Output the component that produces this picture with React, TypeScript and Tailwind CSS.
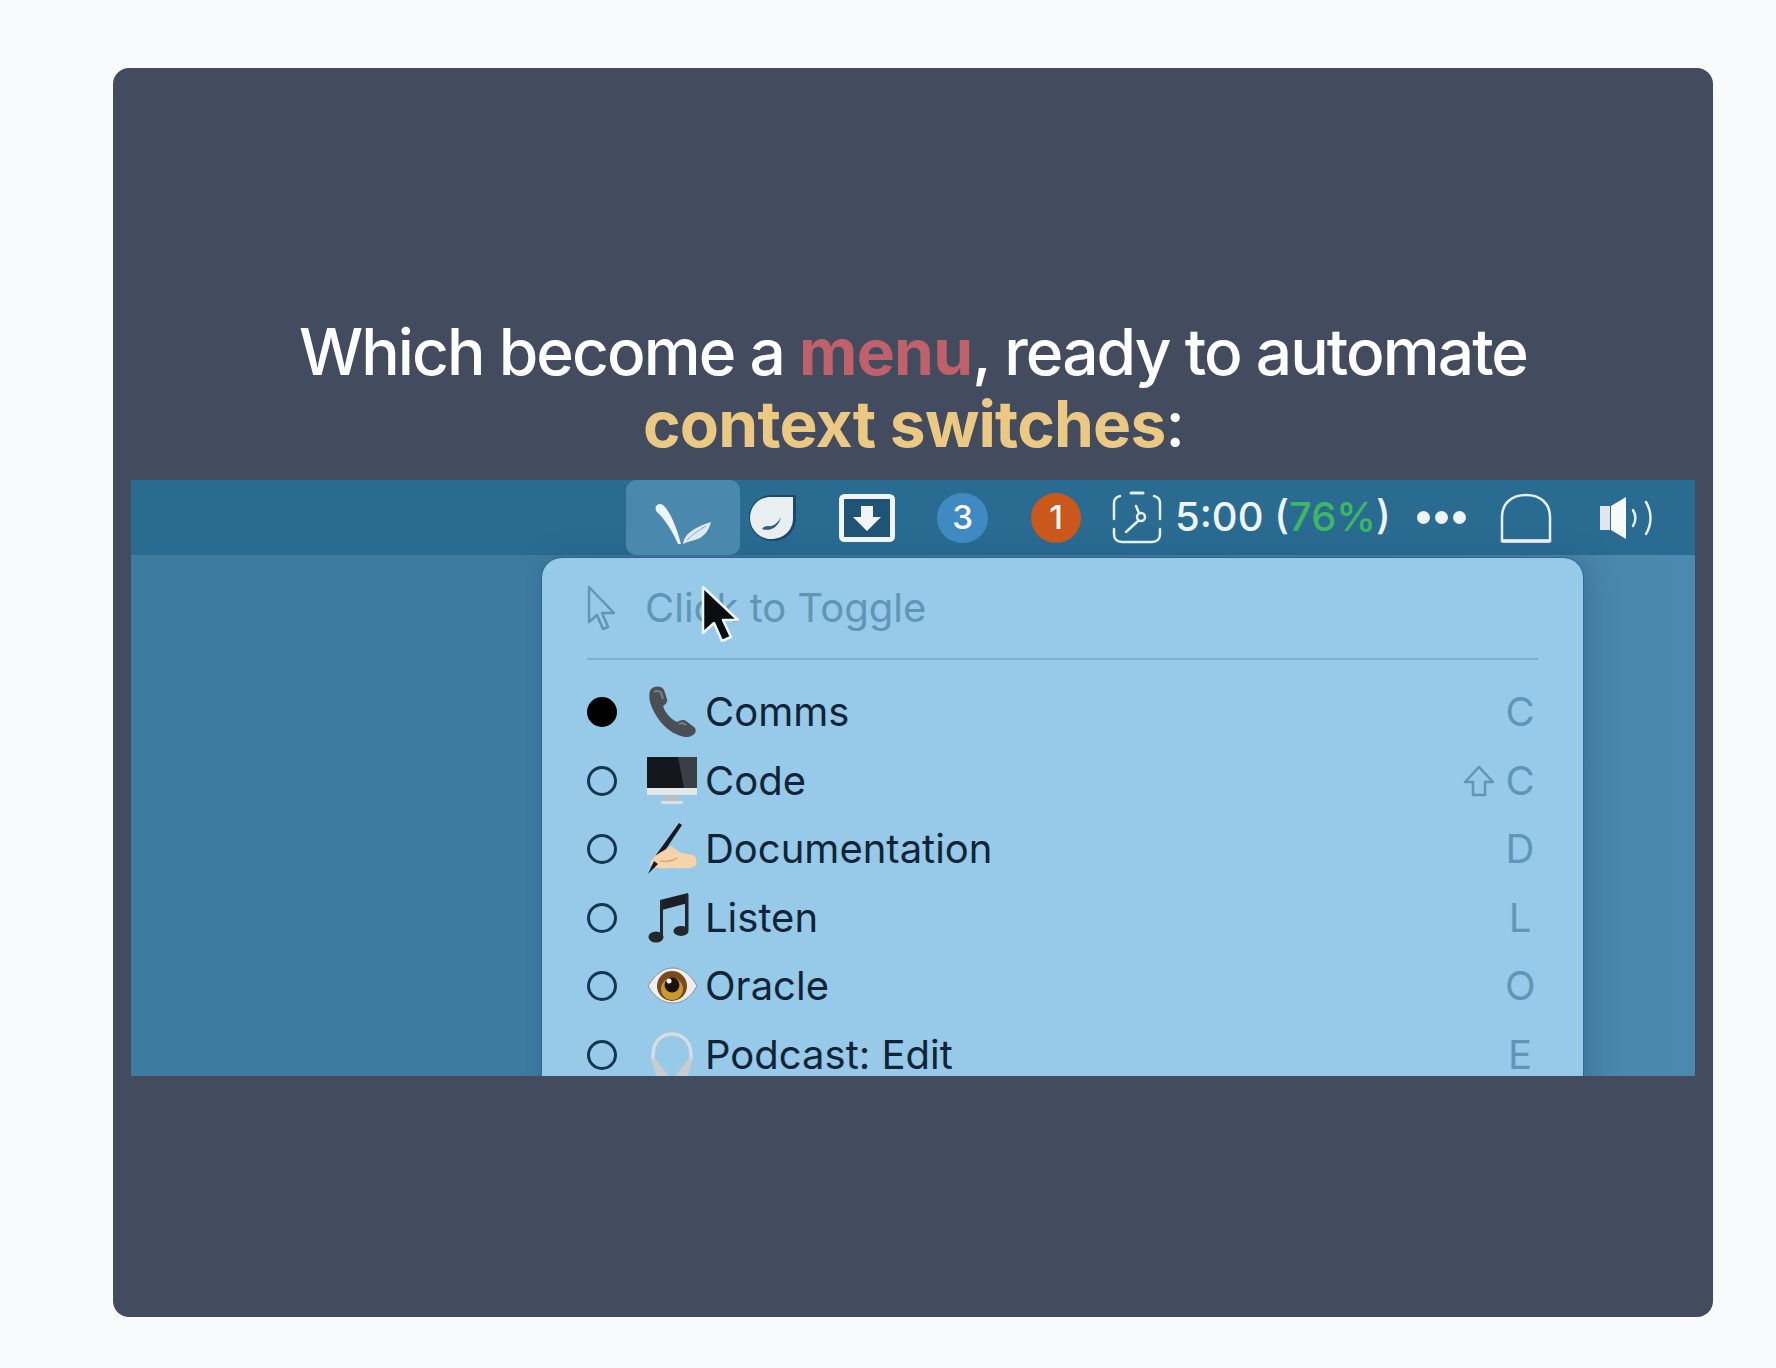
const rows = [
  { label: "Comms", key: "C", active: true, icon: <PhoneEmoji /> },
  { label: "Code", key: "C", shift: true, icon: <MonitorEmoji /> },
  { label: "Documentation", key: "D", icon: <WritingEmoji /> },
  { label: "Listen", key: "L", icon: <NotesEmoji /> },
  { label: "Oracle", key: "O", icon: <EyeEmoji /> },
  { label: "Podcast: Edit", key: "E", icon: <HeadphonesEmoji /> },
];

function PhoneEmoji() {
  return (
    <svg viewBox="0 0 52 52" className="h-[52px] w-[52px]">
      <path d="M5 3c5-4 11-3 13 1l3 9c1 3-1 5-4 7 2 7 8 13 14 16 3-2 7-3 9-1l8 6c3 3 2 7-3 9-3 2-8 1-13-1C19 44 8 30 4 16 3 11 3 6 5 3z" fill="#4a4f55" />
      <path d="M8 6c3-2 6-1 7 1l2 6M33 38c2-1 5-1 7 1" stroke="#7b8086" strokeWidth="2" fill="none" />
    </svg>
  );
}

function MonitorEmoji() {
  return (
    <svg viewBox="0 0 52 52" className="h-[52px] w-[52px]">
      <rect x="1" y="2" width="50" height="31" fill="#14181c" />
      <path d="M32 2h19v31H38z" fill="#3a3f45" />
      <rect x="1" y="33" width="50" height="7" fill="#e3e8ea" />
      <path d="M20 40h12l1 6H19z" fill="#b9c0c4" />
      <rect x="15" y="46" width="22" height="3" rx="1" fill="#d9dee0" />
    </svg>
  );
}

function WritingEmoji() {
  return (
    <svg viewBox="0 0 52 52" className="h-[52px] w-[52px]">
      <path d="M33 0 10 32l4 3L36 2z" fill="#15181c" />
      <path d="M4 42c1-6 6-10 11-13 4-2 7-4 10-6l10 7 12 2c4 2 5 10 1 12-6 2-15 1-22 1-7 0-15 2-22-3z" fill="#f5d3ab" />
      <path d="M2 51l6-13 4 3z" fill="#15181c" />
      <path d="M14 38c6 1 12 0 17-3" stroke="#d8ab7d" strokeWidth="1.500" fill="none" />
    </svg>
  );
}

function NotesEmoji() {
  return (
    <svg viewBox="0 0 52 52" className="h-[52px] w-[52px]">
      <path d="M14 8 42 1v10L16 18z" fill="#1c1f24" />
      <path d="M14 8h3v36h-3zM39 2h3.500v36H39z" fill="#23272c" />
      <ellipse cx="10" cy="45" rx="7.500" ry="5.500" fill="#24282d" />
      <ellipse cx="35" cy="39" rx="7.500" ry="5" fill="#24282d" />
    </svg>
  );
}

function EyeEmoji() {
  return (
    <svg viewBox="0 0 52 52" className="h-[52px] w-[52px]">
      <path d="M2 26C10 13 18 8 27 8c10 0 18 7 24 18-6 11-14 17-24 17S9 38 2 26z" fill="#eceef0" stroke="#8d9297" strokeWidth="1" />
      <circle cx="26" cy="26" r="15" fill="#7a4a1e" />
      <circle cx="26" cy="29" r="11" fill="#c89a2c" />
      <circle cx="26" cy="25" r="7.500" fill="#1a1210" />
      <circle cx="23" cy="21" r="2.500" fill="#fff" />
    </svg>
  );
}

function HeadphonesEmoji() {
  return (
    <svg viewBox="0 0 52 52" className="h-[52px] w-[52px]">
      <path d="M7 30C6 13 15 5 26 5s20 8 19 25" stroke="#d7dde0" strokeWidth="3.500" fill="none" />
      <path d="M5 30l4-1 13 17-5 6H12z" fill="#c7ccd0" />
      <path d="M47 30l-4-1-13 17 5 6h5z" fill="#c7ccd0" />
    </svg>
  );
}

function LeafIcon() {
  return (
    <svg viewBox="0 0 58 42" className="mt-[12px] h-[42px] w-[58px]">
      <path d="M2 7c-2-4 3-8 7-5 6 5 13 20 18 39h-3C18 27 9 14 4 10 3 9 2 8 2 7z" fill="#eef5f9" />
      <path d="M29 41c1-9 9-16 28-22-2 8-6 13-11 16-6 3-12 3-17 6z" fill="#dfeaf1" />
      <path d="M33 37c6-6 12-10 19-14" stroke="#7fb0cd" strokeWidth="1" fill="none" />
    </svg>
  );
}

function DropIcon() {
  return (
    <svg viewBox="0 0 48 48" className="h-[48px] w-[48px]">
      <path d="M24 1h24v23c0 13-10 23-23 23C11 47 1 36 1 24 1 11 11 1 24 1z" fill="#1b4a68" />
      <path d="M23 3h22v21c0 12-9 21-22 21C11 45 2 35 2 24 2 12 11 3 23 3z" fill="#e9eef1" />
      <path d="M14 35c8 3 17-2 19-12-3 6-8 10-13 9-3 0-5 1-6 3z" fill="#2c5f80" />
    </svg>
  );
}

function TrayIcon() {
  return (
    <svg viewBox="0 0 56 48" className="h-[48px] w-[56px]">
      <rect x="2.500" y="2.500" width="51" height="43" rx="3" fill="#1f5477" stroke="#f1f5f7" strokeWidth="5" />
      <path d="M22 12h12v11h8L28 37 14 23h8z" fill="#f1f5f7" />
    </svg>
  );
}

function TimerIcon() {
  return (
    <svg viewBox="0 0 52 54" className="h-[54px] w-[52px]" fill="none" stroke="#e6eef3" strokeWidth="2.500" strokeLinecap="round">
      <path d="M20 2h12" strokeWidth="3" />
      <path d="M9 5C5 6 3 8 3 12v16M43 5c4 1 6 3 6 7v16M3 38v5c0 5 3 8 8 8h30c5 0 8-3 8-8v-5" />
      <circle cx="30" cy="26" r="4" />
      <path d="M25 15l3 7M27 30 15 41" />
    </svg>
  );
}

function ArchIcon() {
  return (
    <svg viewBox="0 0 52 50" className="h-[50px] w-[52px]" fill="none">
      <path d="M2 48V24C2 10 12 2 26 2s24 8 24 22v24z" stroke="#e9f0f4" strokeWidth="2.500" />
      <path d="M2 48h48" stroke="#e9f0f4" strokeWidth="3.500" />
    </svg>
  );
}

function SpeakerIcon() {
  return (
    <svg viewBox="0 0 54 44" className="h-[44px] w-[54px]" fill="none">
      <path d="M1 10h10v24H1z" fill="#dfe7ec" />
      <path d="M12 10 27 1v42L12 34z" fill="#f7fafb" />
      <path d="M34 14c3 5 3 11 0 16" stroke="#e6eef3" strokeWidth="2.500" strokeLinecap="round" />
      <path d="M47 6c6 10 6 22 0 32" stroke="#e6eef3" strokeWidth="2.500" strokeLinecap="round" />
    </svg>
  );
}

function ArrowOutline() {
  return (
    <svg viewBox="0 0 30 46" className="h-[46px] w-[30px]" fill="none">
      <path d="M2 2v35l8-7 6 14 5-2-6-14h12z" stroke="#5f96b8" strokeWidth="2.500" strokeLinejoin="round" />
    </svg>
  );
}

function Cursor() {
  return (
    <svg viewBox="0 0 38 58" className="absolute left-[570px] top-[105px] h-[58px] w-[38px]">
      <path d="M2 2v46l11-10 8 18 9-4-8-17h15z" fill="#0c0d0f" stroke="#eef5f9" strokeWidth="2.500" strokeLinejoin="round" />
    </svg>
  );
}

function ShiftIcon() {
  return (
    <svg viewBox="0 0 32 32" className="h-[32px] w-[32px]" fill="none">
      <path d="M16 2 2 17h8v13h12V17h8z" stroke="#5f96b8" strokeWidth="2.500" strokeLinejoin="round" />
    </svg>
  );
}

export default function App() {
  return (
    <div className="min-h-[1368px] bg-[#f9fafc] pl-[113px] pt-[68px] font-['Inter',sans-serif]">
      <div className="h-[1249px] w-[1600px] rounded-[16px] bg-[#434c5e] px-[18px] pt-[248px]">
        <h1 className="mb-[20px] text-center text-[64px] font-medium leading-[72px] tracking-[-0.03em] text-white">
          Which become a <span className="font-bold tracking-[-0.012em] text-[#bf616a]">menu</span>, ready to automate
          <br />
          <span className="font-bold tracking-[-0.012em] text-[#ebc983]">context switches</span>:
        </h1>

        <div className="relative h-[596px] overflow-hidden bg-gradient-to-r from-[#3d7ba0] from-40% to-[#4c89af]">
          <div className="flex h-[75px] items-center bg-[#2a6b92] pl-[495px] text-white">
            <div className="flex h-[75px] w-[114px] items-center justify-center rounded-[10px] bg-[#4b88ae]">
              <LeafIcon />
            </div>
            <div className="ml-[8px]"><DropIcon /></div>
            <div className="ml-[43px]"><TrayIcon /></div>
            <div className="ml-[42px] flex h-[50px] w-[51px] items-center justify-center rounded-full bg-[#408ac2] text-[33px] font-medium">3</div>
            <div className="ml-[43px] flex h-[50px] w-[50px] items-center justify-center rounded-full bg-[#c9581a] text-[33px] font-medium">1</div>
            <div className="ml-[30px]"><TimerIcon /></div>
            <div className="ml-[12px] mb-[2px] whitespace-nowrap text-[40px] font-medium leading-none text-[#eef4f7]">
              5:00 (<span className="text-[#3cb863]">76%</span>)
            </div>
            <div className="ml-[26px] flex gap-[5px]">
              <span className="h-[13px] w-[13px] rounded-full bg-[#eef4f7]" />
              <span className="h-[13px] w-[13px] rounded-full bg-[#eef4f7]" />
              <span className="h-[13px] w-[13px] rounded-full bg-[#eef4f7]" />
            </div>
            <div className="ml-[34px]"><ArchIcon /></div>
            <div className="ml-[47px]"><SpeakerIcon /></div>
          </div>

          <div className="ml-[411px] mt-[3px] h-[600px] w-[1041px] rounded-t-[20px] bg-[#97c9e8] px-[45px] shadow-[0_0_0_1px_rgba(40,100,140,0.7),6px_0_28px_rgba(30,80,120,0.4)]">
            <div className="flex h-[102px] items-center border-b-2 border-[#7fb2d2]">
              <ArrowOutline />
              <span className="ml-[28px] text-[40px] text-[#5f96b8]">Click to Toggle</span>
            </div>
            <div className="pt-[18px]">
              {rows.map((row) => (
                <div key={row.label} className="flex h-[68.5px] items-center">
                  <span className={row.active ? "h-[30px] w-[30px] rounded-full bg-black" : "h-[30px] w-[30px] rounded-full border-[3px] border-[#16364f]"} />
                  <div className="ml-[29px] flex w-[59px]">{row.icon}</div>
                  <span className="text-[40px] text-[#0f2537]">{row.label}</span>
                  <div className="ml-auto flex items-center gap-[10px] pr-[3px] text-[40px] text-[#5f96b8]">
                    {row.shift && <ShiftIcon />}
                    <span className="w-[30px] text-center">{row.key}</span>
                  </div>
                </div>
              ))}
            </div>
          </div>

          <Cursor />
        </div>
      </div>
    </div>
  );
}
